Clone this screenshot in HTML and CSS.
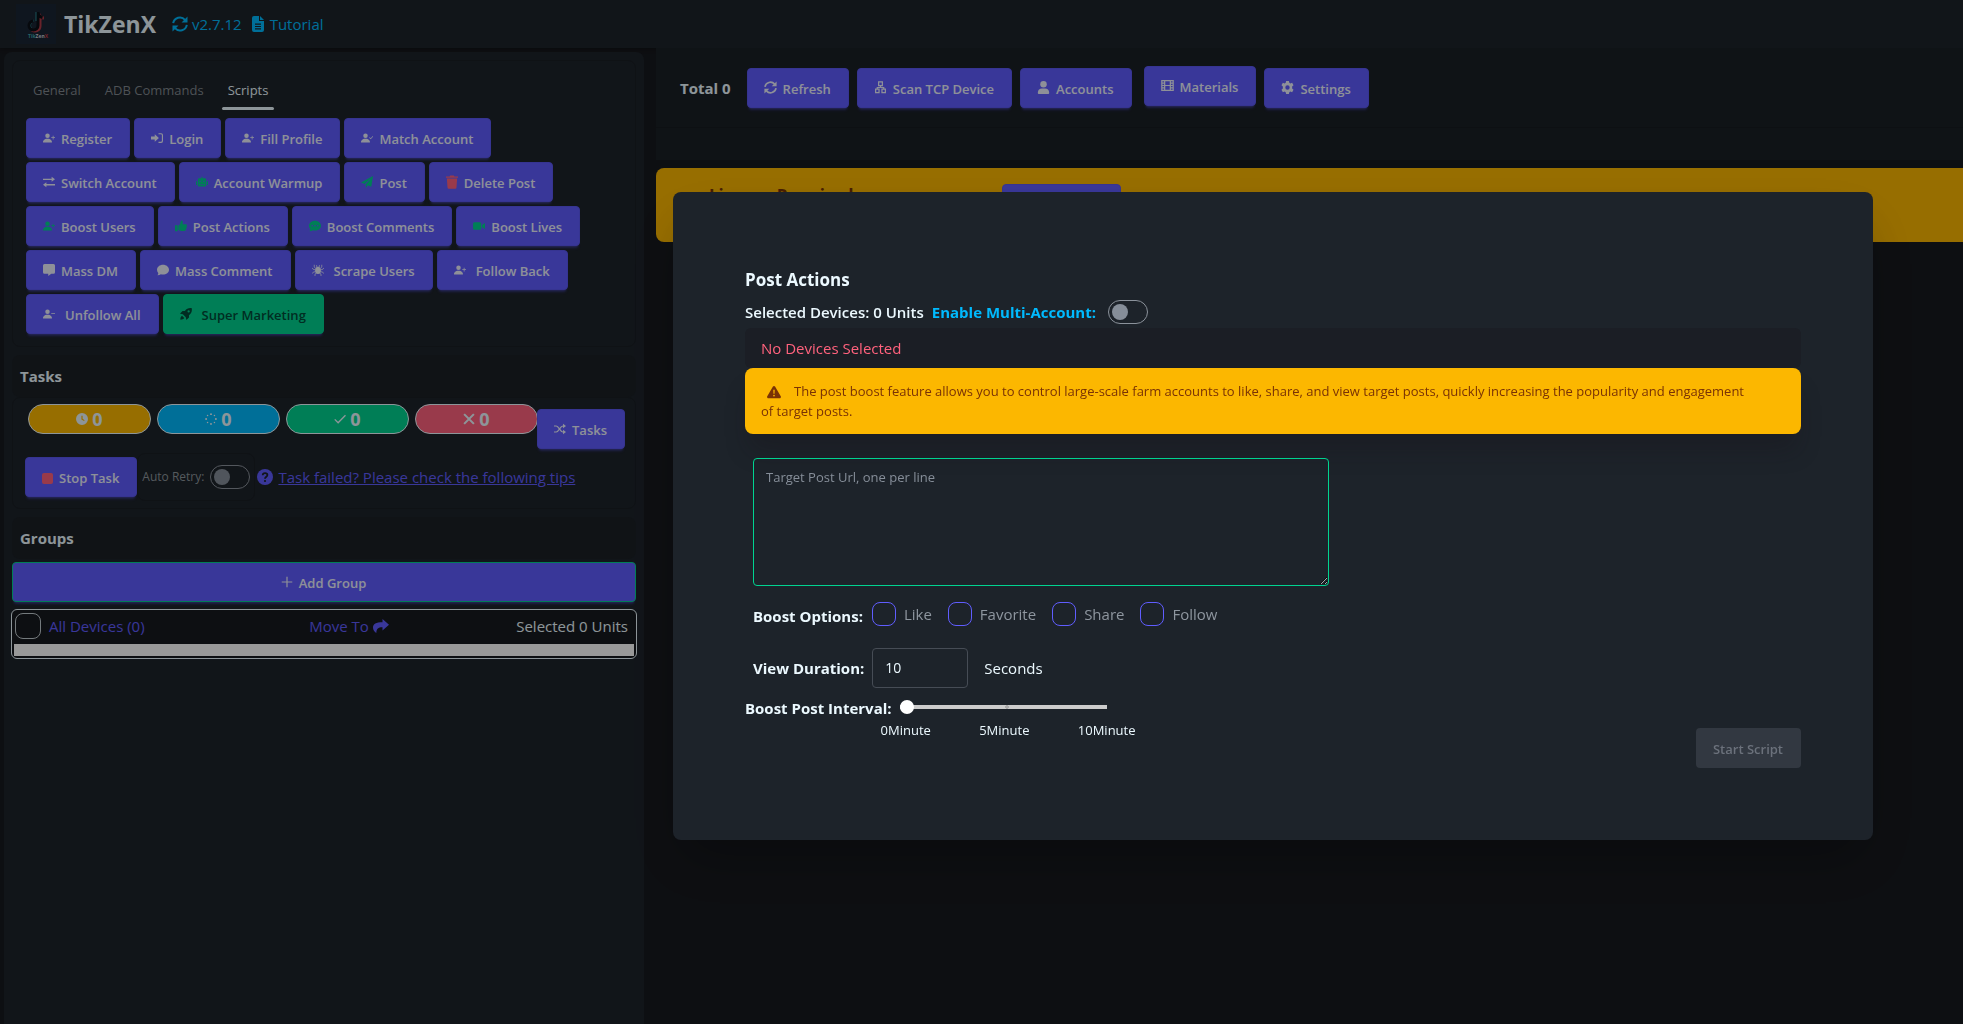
FILE: index.html
```html
<!DOCTYPE html>
<html lang="en">
<head>
  <meta charset="UTF-8">
  <meta name="viewport" content="width=device-width, initial-scale=1">
  <title>TikZenX</title>
  <link rel="stylesheet" href="styles.css">
</head>
<body>
  <!-- Icon set -->
  <svg class="sprite" xmlns="http://www.w3.org/2000/svg">
    <symbol id="i-person" viewBox="0 0 16 16"><path d="M0 13.500c0-2 1.500-4.500 6-4.500s6 2.500 6 4.500c0 .4-.4.500-1 .5H1c-.6 0-1-.1-1-.5zM6 8a3 3 0 1 0 0-6 3 3 0 0 0 0 6z"/></symbol>
    <symbol id="i-user-plus" viewBox="0 0 16 16"><use href="#i-person"/><path d="M13 5h1v2h2v1h-2v2h-1V8h-2V7h2z"/></symbol>
    <symbol id="i-user-minus" viewBox="0 0 16 16"><use href="#i-person"/><path d="M11 7h5v1h-5z"/></symbol>
    <symbol id="i-user-check" viewBox="0 0 16 16"><use href="#i-person"/><path d="M15.800 5.200l.7.700-3.600 3.700-2-2 .7-.7 1.300 1.300z"/></symbol>
    <symbol id="i-login" viewBox="0 0 16 16"><path d="M0 6h5V3l5.500 5L5 13v-3H0zM10 1.500h3.500A2.500 2.500 0 0 1 16 4v8a2.500 2.500 0 0 1-2.500 2.500H10V13h3.300c.7 0 1.200-.5 1.200-1.200V4.200c0-.7-.5-1.200-1.200-1.200H10z"/></symbol>
    <symbol id="i-swap" viewBox="0 0 16 16"><path d="M0 3.500h11.500V1L16 4.300l-4.500 3.300V5.200H0zM16 12.500H4.500V15L0 11.700l4.500-3.300v2.400H16z"/></symbol>
    <symbol id="i-robot" viewBox="0 0 16 16"><path fill-rule="evenodd" d="M7.300 1h1.400v2H12a1.500 1.500 0 0 1 1.500 1.500v8A1.500 1.500 0 0 1 12 14H4a1.500 1.500 0 0 1-1.500-1.500v-8A1.500 1.500 0 0 1 4 3h3.300zM5.500 6a1 1 0 1 0 0 2 1 1 0 0 0 0-2zm5 0a1 1 0 1 0 0 2 1 1 0 0 0 0-2zM4.500 10.500v1.200h1.800v-1.200zm2.600 0v1.200h1.800v-1.200zm2.600 0v1.200h1.800v-1.200zM0 7h1.500v5H.8a.8.8 0 0 1-.8-.8zM14.500 7H16v4.200a.8.8 0 0 1-.8.8h-.7z"/></symbol>
    <symbol id="i-plane" viewBox="0 0 16 16"><path d="M16 0l-2.300 14.200L9 12.300 6.500 16v-4.700L13.500 3 4.600 10.500 0 8.800z"/></symbol>
    <symbol id="i-trash" viewBox="0 0 14 16"><path d="M0 1.500h4.200L5 .3h4l.8 1.200H14V3H0zM1 4h12l-.8 10.500a1.500 1.500 0 0 1-1.500 1.500H3.300a1.500 1.500 0 0 1-1.500-1.500z"/></symbol>
    <symbol id="i-thumb" viewBox="0 0 16 16"><path d="M0 7h3.500v8H0zM4.500 7.500C7 6 7.300 4 7.500 2.200 7.600 1 8.300.5 9 .6c1.600.3 1.800 2.400.9 5.200h4.500c1.600 0 1.900 1.500 1 2.400.6.700.5 1.600-.3 2.200.4.800.1 1.600-.7 2 .3 1.400-.5 2.100-1.800 2.100H8.500C6.800 14.500 6 14 4.500 13.300z"/></symbol>
    <symbol id="i-chat-dots" viewBox="0 0 16 16"><path fill-rule="evenodd" d="M8 1c4.400 0 8 2.900 8 6.500S12.400 14 8 14c-1 0-2-.2-2.800-.4C4 14.500 2.300 15 .5 15c1-1 1.300-2 1.200-3C.6 10.700 0 9.200 0 7.500 0 3.900 3.600 1 8 1zM4.300 6.500a1.100 1.100 0 1 0 0 2.200 1.100 1.100 0 0 0 0-2.200zm3.700 0a1.100 1.100 0 1 0 0 2.200 1.100 1.100 0 0 0 0-2.200zm3.700 0a1.100 1.100 0 1 0 0 2.200 1.100 1.100 0 0 0 0-2.200z"/></symbol>
    <symbol id="i-chat" viewBox="0 0 16 16"><path d="M8 1c4.400 0 8 2.900 8 6.500S12.400 14 8 14c-1 0-2-.2-2.800-.4C4 14.500 2.300 15 .5 15c1-1 1.300-2 1.200-3C.6 10.700 0 9.200 0 7.500 0 3.900 3.600 1 8 1z"/></symbol>
    <symbol id="i-message" viewBox="0 0 16 16"><path d="M2 0h12a2 2 0 0 1 2 2v9a2 2 0 0 1-2 2h-3l-4 3v-3H2a2 2 0 0 1-2-2V2a2 2 0 0 1 2-2z"/></symbol>
    <symbol id="i-video" viewBox="0 0 16 16"><path d="M2 3h7a2 2 0 0 1 2 2v6a2 2 0 0 1-2 2H2a2 2 0 0 1-2-2V5a2 2 0 0 1 2-2zM12 6.500L16 4v8l-4-2.500z"/></symbol>
    <symbol id="i-bug" viewBox="0 0 16 16"><ellipse cx="8" cy="8.500" rx="3.800" ry="4.800"/><path fill="none" stroke="currentColor" d="M5 6L3 4V1M11 6l2-2V1M5 8L1.500 7 0 5M11 8l3.500-1L16 5M5 10l-3.500 1L0 13M11 10l3.500 1 1.500 2M6 12l-2 1.500V16M10 12l2 1.500V16M6.500 4L6 1.500M9.500 4L10 1.500"/></symbol>
    <symbol id="i-rocket" viewBox="0 0 16 16"><path fill-rule="evenodd" d="M15.700.3c.6 3.800-.4 6.700-3.700 9.200v3.200L8.500 16l-.8-3.800-3.900-3.900L0 7.500 3.300 4h3.200C9 .7 11.900-.3 15.700.3zM11.500 3a1.500 1.500 0 1 0 0 3 1.500 1.500 0 0 0 0-3zM2.700 10.300l3 3C4.800 15 3 15.500.5 15.500.5 13 1 11.200 2.700 10.300z"/></symbol>
    <symbol id="i-sync" viewBox="0 0 16 16"><path fill="none" stroke="currentColor" stroke-width="2" d="M1.200 7.200A6.800 6.800 0 0 1 13 3.800M14.800 8.800A6.800 6.800 0 0 1 3 12.200"/><path d="M15.500.5v6h-6zM.5 15.500v-6h6z"/></symbol>
    <symbol id="i-file" viewBox="0 0 12 16"><path fill-rule="evenodd" d="M2 0h5v5h5v9a2 2 0 0 1-2 2H2a2 2 0 0 1-2-2V2a2 2 0 0 1 2-2zM8 0l4 4H8zM3 7.500v1.200h6V7.500zm0 2.400v1.200h6V9.900zm0 2.400v1.200h6v-1.200z"/></symbol>
    <symbol id="i-network" viewBox="0 0 16 16"><g fill="none" stroke="currentColor" stroke-width="1.500"><path d="M5.700 1.200h4.600v4.600H5.700zM2 10h4.200v4.200H2zM9.800 10H14v4.200H9.800zM8 6v2M4 10V8h8v2"/></g></symbol>
    <symbol id="i-user" viewBox="0 0 14 16"><circle cx="7" cy="4" r="4"/><path d="M0 14.500C0 11 2.500 9.300 5 9.300h4c2.500 0 5 1.700 5 5.200 0 .9-.6 1.500-1.500 1.500h-11C.6 16 0 15.400 0 14.500z"/></symbol>
    <symbol id="i-film" viewBox="0 0 16 16"><path fill="none" stroke="currentColor" stroke-width="1.500" d="M1 2h14v12H1zM4.500 2v12M11.500 2v12M4.500 8h7M1 5h3.500M1 8h3.500M1 11h3.500M11.500 5H15M11.500 8H15M11.500 11H15"/></symbol>
    <symbol id="i-gear" viewBox="0 0 16 16"><path fill-rule="evenodd" d="M6.300 0h3.400l.5 2.200 1.300.8 2.200-.7 1.700 3-1.700 1.500v2.400l1.700 1.500-1.700 3-2.200-.7-1.300.8L9.700 16H6.300l-.5-2.200-1.300-.8-2.200.7-1.700-3 1.700-1.500V6.800L.6 5.300l1.700-3 2.200.7 1.300-.8zM8 5.300a2.700 2.700 0 1 0 0 5.400 2.700 2.700 0 0 0 0-5.400z"/></symbol>
    <symbol id="i-clock" viewBox="0 0 16 16"><path fill-rule="evenodd" d="M8 0a8 8 0 1 1 0 16A8 8 0 0 1 8 0zM7.200 3.500v5l3.500 2.300.8-1.300-2.700-1.800V3.500z"/></symbol>
    <symbol id="i-spinner" viewBox="0 0 16 16"><circle cx="8" cy="1.500" r="1.300"/><circle cx="12.600" cy="3.400" r="1"/><circle cx="14.500" cy="8" r="1.300"/><circle cx="12.600" cy="12.600" r="1"/><circle cx="8" cy="14.500" r="1.300"/><circle cx="3.400" cy="12.600" r="1"/><circle cx="1.500" cy="8" r="1.300"/><circle cx="3.400" cy="3.400" r="1"/></symbol>
    <symbol id="i-check" viewBox="0 0 16 16"><path fill="none" stroke="currentColor" stroke-width="1.800" d="M1 8.500l4.500 4.500L15.300 3"/></symbol>
    <symbol id="i-x" viewBox="0 0 16 16"><path fill="none" stroke="currentColor" stroke-width="2.800" d="M1.500 1.500l13 13M14.500 1.500l-13 13"/></symbol>
    <symbol id="i-shuffle" viewBox="0 0 16 16"><path fill="none" stroke="currentColor" stroke-width="1.600" d="M0 4h3c3.500 0 5 8 9 8h1M0 12h3c3.500 0 5-8 9-8h1"/><path d="M12 1l4 3-4 3zM12 9l4 3-4 3z"/></symbol>
    <symbol id="i-help" viewBox="0 0 16 16"><circle cx="8" cy="8" r="8"/><path fill="none" stroke="#1d232a" stroke-width="1.800" d="M5.700 6.200C5.700 3.400 10.400 3.500 10.400 6.100 10.400 7.800 8 7.700 8 9.700"/><circle cx="8" cy="12" r="1.100" fill="#1d232a"/></symbol>
    <symbol id="i-plus" viewBox="0 0 16 16"><path d="M7.200 1h1.600v6.200H15v1.600H8.800V15H7.200V8.800H1V7.200h6.200z"/></symbol>
    <symbol id="i-share" viewBox="0 0 16 16"><path d="M9.500 1L16 6.800 9.500 12.500V9.300C5.500 9.200 3.500 10.500 3.300 15 1.500 14 0 11.800 0 9.500 0 6 3 4.200 9.500 4.200z"/></symbol>
    <symbol id="i-warning" viewBox="0 0 16 16"><path fill-rule="evenodd" d="M8 1c.5 0 .9.300 1.200.8l6.500 11c.6 1-.1 2.200-1.200 2.200h-13C.4 15-.3 13.800.3 12.800l6.500-11C7.100 1.300 7.500 1 8 1zM7.200 5.500l.2 4.500h1.200l.2-4.500zM8 11a1 1 0 1 0 0 2 1 1 0 0 0 0-2z"/></symbol>
  </svg>

  <header class="topbar">
    <svg class="logo" viewBox="0 0 40 40">
      <rect width="40" height="40" fill="#1a2534"/>
      <g fill="none">
        <path stroke="#2a8a94" stroke-width="2" d="M20.500 8v9M18 16.500a5 5 0 0 0-3 8"/>
        <path stroke="#b03a46" stroke-width="3" d="M23 10c1 3 2.500 4 5 4M24 12v10a5 5 0 0 1-8 4"/>
        <path stroke="#0b0f16" stroke-width="3" d="M22 8v13.500a4.500 4.500 0 1 1-4.500-4.500M22 9c.5 3 2 4 4.500 4.500"/>
      </g>
      <text x="12" y="34" font-size="5" font-weight="700" fill="#3fa5ad">Tik<tspan fill="#c9ced6">Zen</tspan><tspan fill="#c03a48">X</tspan></text>
    </svg>
    <h1>TikZenX</h1>
    <a href="#"><svg class="icon"><use href="#i-sync"/></svg>v2.7.12</a>
    <a href="#"><svg class="icon doc"><use href="#i-file"/></svg>Tutorial</a>
  </header>

  <div class="layout">
    <aside class="sidebar">
      <section class="card scripts">
        <nav class="tabs">
          <button>General</button>
          <button>ADB Commands</button>
          <button class="active">Scripts</button>
        </nav>
        <div class="script-list">
          <button class="btn"><svg class="icon"><use href="#i-user-plus"/></svg>Register</button>
          <button class="btn"><svg class="icon"><use href="#i-login"/></svg>Login</button>
          <button class="btn"><svg class="icon"><use href="#i-user-plus"/></svg>Fill Profile</button>
          <button class="btn"><svg class="icon"><use href="#i-user-check"/></svg>Match Account</button>
          <button class="btn"><svg class="icon"><use href="#i-swap"/></svg>Switch Account</button>
          <button class="btn"><svg class="icon green"><use href="#i-robot"/></svg>Account Warmup</button>
          <button class="btn"><svg class="icon green"><use href="#i-plane"/></svg>Post</button>
          <button class="btn"><svg class="icon red trash"><use href="#i-trash"/></svg>Delete Post</button>
          <button class="btn"><svg class="icon green"><use href="#i-user-plus"/></svg>Boost Users</button>
          <button class="btn"><svg class="icon green"><use href="#i-thumb"/></svg>Post Actions</button>
          <button class="btn"><svg class="icon green"><use href="#i-chat-dots"/></svg>Boost Comments</button>
          <button class="btn"><svg class="icon green"><use href="#i-video"/></svg>Boost Lives</button>
          <button class="btn"><svg class="icon"><use href="#i-message"/></svg>Mass DM</button>
          <button class="btn"><svg class="icon"><use href="#i-chat"/></svg>Mass Comment</button>
          <button class="btn wide"><svg class="icon"><use href="#i-bug"/></svg>Scrape Users</button>
          <button class="btn wide"><svg class="icon"><use href="#i-user-plus"/></svg>Follow Back</button>
          <button class="btn wide"><svg class="icon"><use href="#i-user-minus"/></svg>Unfollow All</button>
          <button class="btn wide success"><svg class="icon"><use href="#i-rocket"/></svg>Super Marketing</button>
        </div>
      </section>

      <h2 class="section-title">Tasks</h2>
      <section class="card tasks">
        <div class="task-counts">
          <span class="badge warning"><svg class="icon"><use href="#i-clock"/></svg>0</span>
          <span class="badge info"><svg class="icon"><use href="#i-spinner"/></svg>0</span>
          <span class="badge ok"><svg class="icon"><use href="#i-check"/></svg>0</span>
          <span class="badge error"><svg class="icon"><use href="#i-x"/></svg>0</span>
          <button class="btn"><svg class="icon"><use href="#i-shuffle"/></svg>Tasks</button>
        </div>
        <div class="task-actions">
          <button class="btn"><span class="stop"></span>Stop Task</button>
          <label class="retry">Auto Retry: <input type="checkbox" class="toggle"></label>
          <a href="#"><svg class="icon"><use href="#i-help"/></svg><span>Task failed? Please check the following tips</span></a>
        </div>
      </section>

      <h2 class="section-title">Groups</h2>
      <button class="btn add-group"><svg class="icon"><use href="#i-plus"/></svg>Add Group</button>
      <div class="group">
        <div class="group-row">
          <label><input type="checkbox" class="checkbox"> All Devices (0)</label>
          <a href="#">Move To<svg class="icon"><use href="#i-share"/></svg></a>
          <span>Selected 0 Units</span>
        </div>
        <div class="group-bar"></div>
      </div>
    </aside>

    <main class="content">
      <div class="toolbar">
        <strong>Total 0</strong>
        <button class="btn"><svg class="icon"><use href="#i-sync"/></svg>Refresh</button>
        <button class="btn"><svg class="icon"><use href="#i-network"/></svg>Scan TCP Device</button>
        <button class="btn"><svg class="icon"><use href="#i-user"/></svg>Accounts</button>
        <button class="btn raised"><svg class="icon"><use href="#i-film"/></svg>Materials</button>
        <button class="btn"><svg class="icon"><use href="#i-gear"/></svg>Settings</button>
      </div>
      <div class="toolbar-sub"></div>
      <div class="license">
        <h3>License Required</h3>
        <button class="btn" aria-label="Activate"></button>
      </div>
    </main>
  </div>

  <!-- Post actions modal -->
  <div class="modal">
    <div class="modal-box" role="dialog" aria-labelledby="modal-title">
      <h2 id="modal-title">Post Actions</h2>
      <div class="device-row">
        <span>Selected Devices: 0 Units</span>
        <label>Enable Multi-Account: <input type="checkbox" class="toggle"></label>
      </div>
      <div class="no-devices">No Devices Selected</div>
      <div class="notice"><svg class="icon"><use href="#i-warning"/></svg>The post boost feature allows you to control large-scale farm accounts to like, share, and view target posts, quickly increasing the popularity and engagement of target posts.</div>

      <div class="fields">
        <textarea placeholder="Target Post Url, one per line" aria-label="Target Post Url"></textarea>
        <div class="options">
          <strong>Boost Options:</strong>
          <label><input type="checkbox" class="checkbox primary">Like</label>
          <label><input type="checkbox" class="checkbox primary">Favorite</label>
          <label><input type="checkbox" class="checkbox primary">Share</label>
          <label><input type="checkbox" class="checkbox primary">Follow</label>
        </div>
        <div class="duration">
          <label for="duration">View Duration:</label>
          <input type="text" inputmode="numeric" id="duration" value="10">
          <span>Seconds</span>
        </div>
      </div>
      <div class="interval">
        <label for="interval">Boost Post Interval:</label>
        <div class="slider">
          <input type="range" id="interval" min="0" max="10" value="0">
          <div class="marks"><span>0Minute</span><span>5Minute</span><span>10Minute</span></div>
        </div>
      </div>
      <div class="modal-action">
        <button class="btn" disabled>Start Script</button>
      </div>
    </div>
  </div>
</body>
</html>
```
FILE: styles.css
```css
* {
  box-sizing: border-box;
}
:root {
  --base-100: #1d232a;
  --base-200: #191e24;
  --text: #ecf9ff;
  --primary: #605dff;
  --success: #00d390;
  --warning: #fcb700;
  --error: #ff627d;
  --info: #00bafe;
}
body {
  margin: 0;
  min-height: 100vh;
  display: flex;
  flex-direction: column;
  background: #17191e;
  color: var(--text);
  font-family: "Segoe UI", "Open Sans", sans-serif;
  font-size: 15px;
  line-height: 24px;
}
h1, h2, h3 {
  margin: 0;
}
button, input, textarea {
  font-family: inherit;
  color: inherit;
}
.sprite {
  display: none;
}
.icon {
  width: 12px;
  height: 12px;
  fill: currentColor;
  flex: none;
}
.green { color: var(--success); }
.red { color: var(--error); }

/* Buttons */
.btn {
  display: inline-flex;
  align-items: center;
  justify-content: center;
  gap: 6px;
  height: 40px;
  padding: 2px 17px 0 16px;
  border: 1px solid #5b58f2;
  border-radius: 4px;
  background: var(--primary);
  color: #edf1fe;
  font-size: 13px;
  font-weight: 600;
  white-space: nowrap;
  cursor: pointer;
  box-shadow: 0 3px 2px -2px rgba(96, 93, 255, 0.3), 0 4px 3px -2px rgba(96, 93, 255, 0.3);
}
.btn .icon {
  margin-bottom: 2px;
}
.btn.wide {
  gap: 10px;
}
.btn.success {
  background: var(--success);
  border-color: var(--success);
  color: #004c39;
}
.btn .trash {
  height: 14px;
}

/* Header */
.topbar {
  display: flex;
  align-items: center;
  height: 48px;
  padding: 0 16px;
  background: var(--base-100);
  box-shadow: 0 1px 4px rgba(0, 0, 0, 0.3);
}
.logo {
  width: 40px;
  height: 40px;
}
.topbar h1 {
  margin: 0 16px 0 8px;
  font-size: 23px;
}
.topbar a {
  display: flex;
  align-items: center;
  gap: 4px;
  margin-right: 10px;
  color: var(--info);
  text-decoration: none;
}
.topbar .icon {
  width: 16px;
  height: 16px;
}
.topbar .doc {
  width: 12px;
  margin-right: 2px;
}

.layout {
  flex: 1;
  display: flex;
  gap: 12px;
  padding-left: 4px;
}
.sidebar {
  flex: 0 0 640px;
  min-width: 0;
  margin-top: 4px;
  padding: 8px;
  border-radius: 8px 8px 0 0;
  background: var(--base-100);
}
.card {
  border: 1px solid var(--base-200);
  border-radius: 8px;
}
.scripts {
  padding: 9px 8px 12px;
}
.tabs {
  display: flex;
  height: 40px;
}
.tabs button {
  position: relative;
  padding: 0 12px;
  border: none;
  background: none;
  color: #82898f;
  font-size: 13px;
}
.tabs .active {
  color: var(--text);
}
.tabs .active::after {
  content: "";
  position: absolute;
  left: 10%;
  bottom: 0;
  width: 80%;
  height: 3px;
  border-radius: 2px;
  background: var(--text);
}
.script-list {
  display: flex;
  flex-wrap: wrap;
  gap: 4px;
  padding: 8px 5px 0;
}

/* Tasks */
.section-title {
  margin-top: 8px;
  padding: 9px 8px;
  border-radius: 8px;
  background: #1b2026;
  font-size: 15px;
}
.tasks {
  padding: 6px 8px 7px 12px;
}
.task-counts {
  display: flex;
  gap: 6px;
  padding-left: 3px;
}
.badge {
  display: flex;
  flex: 0 0 123px;
  align-items: center;
  justify-content: center;
  gap: 4px;
  height: 30px;
  border: 1px solid var(--text);
  border-radius: 15px;
  font-size: 18px;
  font-weight: 700;
}
.badge.warning { background: var(--warning); }
.badge.info { background: var(--info); }
.badge.ok { background: var(--success); }
.badge.error { background: var(--error); }
.task-counts .btn {
  margin: 5px 0 0 -7px;
}
.task-actions {
  display: flex;
  align-items: center;
  margin-top: 4px;
}
.stop {
  width: 11px;
  height: 11px;
  border-radius: 2px;
  background: var(--error);
}
.retry {
  display: flex;
  align-items: center;
  gap: 6px;
  height: 48px;
  padding: 0 4px;
  border: 1px solid var(--base-200);
  border-radius: 8px;
  color: #8e969c;
  font-size: 12px;
}
.toggle {
  appearance: none;
  width: 40px;
  height: 24px;
  margin: 0;
  padding: 3px;
  border: 1px solid #8b929b;
  border-radius: 12px;
}
.toggle::before {
  content: "";
  display: block;
  width: 16px;
  height: 16px;
  border-radius: 8px;
  background: #868e99;
}
.task-actions a {
  display: flex;
  align-items: center;
  gap: 5px;
  margin-left: 2px;
  color: var(--primary);
  text-decoration: none;
}
.task-actions a span {
  text-decoration: underline;
}
.task-actions a .icon {
  width: 16px;
  height: 16px;
}

/* Groups */
.add-group {
  width: 100%;
  margin-top: 3px;
  border-color: var(--success);
}
.group {
  margin: 7px -1px 0;
  padding: 2px;
  border: 1px solid var(--text);
  border-radius: 6px;
  background: #17191e;
}
.group-row {
  display: grid;
  grid-template-columns: 48% 1fr auto;
  align-items: center;
  padding: 1px 6px 5px 1px;
}
.group-row label, .group-row a {
  display: flex;
  align-items: center;
  color: var(--primary);
  text-decoration: none;
}
.group-row a .icon {
  width: 16px;
  height: 16px;
  margin-left: 4px;
}
.checkbox {
  appearance: none;
  width: 24px;
  height: 24px;
  margin: 0 8px 0 0;
  border: 1px solid #c2ccd1;
  border-radius: 8px;
}
.group-row .checkbox {
  width: 26px;
  height: 26px;
}
.checkbox.primary {
  border-color: var(--primary);
}
.group-bar {
  height: 12px;
  background: #fff;
}

/* Main area */
.content {
  flex: 1;
  min-width: 0;
}
.toolbar {
  display: flex;
  align-items: center;
  gap: 8px;
  height: 80px;
  padding: 0 24px;
  background: #1a2026;
  border-bottom: 1px solid #171b20;
}
.toolbar strong {
  margin-right: 8px;
}
.toolbar .raised {
  margin: 0 0 4px 4px;
}
.toolbar .icon {
  width: 13px;
  height: 13px;
}
.toolbar-sub {
  height: 32px;
  background: #1a2026;
}
.license {
  display: flex;
  align-items: flex-start;
  gap: 148px;
  height: 74px;
  margin-top: 8px;
  padding: 16px 53px;
  border-radius: 8px 0 0 8px;
  background: var(--warning);
  color: #793205;
}
.license h3 {
  font-size: 17px;
}
.license .btn {
  width: 119px;
}

/* Modal */
.modal {
  position: fixed;
  inset: 0;
  display: flex;
  align-items: center;
  justify-content: center;
  padding: 7px 0 0 583px;
  background: rgba(0, 0, 0, 0.4);
}
.modal-box {
  width: 1200px;
  padding: 72px;
  border-radius: 8px;
  background: var(--base-100);
  box-shadow: 0 25px 50px -12px rgba(0, 0, 0, 0.3);
}
.modal-box h2 {
  padding-bottom: 4px;
  font-size: 17px;
  line-height: 32px;
}
.device-row {
  display: flex;
  align-items: center;
  gap: 8px;
  height: 24px;
  font-weight: 600;
}
.device-row label {
  display: flex;
  align-items: center;
  gap: 12px;
  color: var(--info);
  font-weight: 700;
}
.no-devices {
  margin-top: 4px;
  padding: 8px 16px;
  border-radius: 6px;
  background: #1b1e25;
  color: var(--error);
}
.notice {
  padding: 13px 48px 13px 16px;
  border-radius: 8px;
  background: var(--warning);
  color: #793205;
  font-size: 13px;
  line-height: 20px;
  box-shadow: 0 20px 25px -5px rgba(23, 16, 24, 0.3);
}
.notice .icon {
  width: 14px;
  height: 14px;
  margin: 0 13px 0 6px;
  vertical-align: -3px;
}
.fields {
  padding: 24px 8px 0;
}
.fields textarea {
  display: block;
  width: 576px;
  max-width: 100%;
  height: 128px;
  padding: 8px 12px;
  border: 1px solid var(--success);
  border-radius: 4px;
  background: none;
  font-size: 13px;
  line-height: 20px;
}
.fields textarea::placeholder {
  color: #868e99;
}
.options {
  display: flex;
  align-items: center;
  gap: 16px;
  margin-top: 14px;
}
.options strong {
  margin: 4px -7px 0 0;
}
.options label {
  display: flex;
  align-items: center;
  color: #8e969f;
}
.duration {
  display: flex;
  align-items: center;
  gap: 8px;
  margin-top: 20px;
}
.duration label, .interval label {
  font-weight: 700;
}
.duration input {
  width: 96px;
  height: 40px;
  padding: 0 12px;
  border: 1px solid #464c55;
  border-radius: 4px;
  background: none;
  font-size: 14px;
}
.duration span {
  margin-left: 8px;
}
.interval {
  display: flex;
  gap: 8px;
  margin-top: 8px;
}
.slider {
  width: 214px;
}
.slider input {
  appearance: none;
  display: block;
  width: 207px;
  height: 22px;
  margin: 0;
  background: radial-gradient(circle at 107px center, #aaa 2px, transparent 2px), linear-gradient(#ccc, #ccc) center / 100% 4px no-repeat;
}
.slider input::-webkit-slider-thumb {
  appearance: none;
  width: 14px;
  height: 14px;
  border-radius: 50%;
  background: #fff;
}
.marks {
  display: flex;
  justify-content: space-between;
  margin: 0 -22px 0 -19px;
  font-size: 13px;
}
.modal-action {
  display: flex;
  justify-content: flex-end;
  margin-top: -14px;
}
.modal-action .btn {
  border-color: transparent;
  background: #323841;
  color: #6b717b;
  box-shadow: none;
}
```
